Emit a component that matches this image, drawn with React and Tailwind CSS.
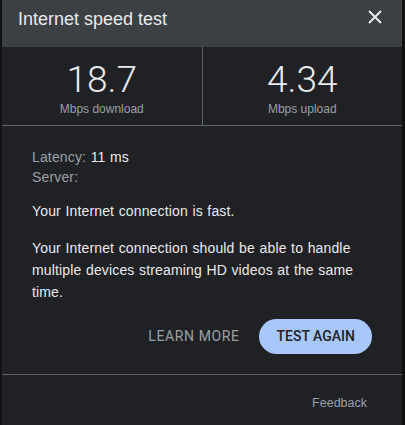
import React from "react";

// Speed test result card
const Stat = ({ value, label, border }) => (
  <div className={`flex-1 flex flex-col items-center pt-[15px] ${border ? "border-r border-[#5f6368]" : ""}`}>
    <div className="font-['Roboto',sans-serif] font-light text-[37px] leading-[36px] text-[#e8eaed]">
      {value}
    </div>
    <div className="text-[12px] leading-[12px] mt-[5px] text-[#9aa0a6]">{label}</div>
  </div>
);

export default function App() {
  return (
    <div className="w-[405px] h-[425px] bg-[#111] flex font-['Liberation_Sans',Arial,sans-serif]">
      <div className="ml-[2px] w-[400px] h-full bg-[#202124] flex flex-col">
        {/* Header */}
        <div className="h-[47px] bg-[#3c4043] flex items-start justify-between pl-[16px] pr-[20px] pt-[8px]">
          <span className="text-[18px] leading-[22px] text-[#e8eaed]">Internet speed test</span>
          <svg width="14" height="14" viewBox="0 0 14 14" className="mt-[2px]">
            <path d="M1 1 L13 13 M13 1 L1 13" stroke="#e8eaed" strokeWidth="2" />
          </svg>
        </div>

        {/* Results */}
        <div className="flex h-[79px] border-b border-[#5f6368]">
          <Stat value="18.7" label="Mbps download" border />
          <Stat value="4.34" label="Mbps upload" />
        </div>

        {/* Details */}
        <div className="px-[30px] pt-[21px] text-[14px] tracking-[0.15px] [word-spacing:0.5px]">
          <div className="leading-[20px] text-[#9aa0a6]">
            Latency: <span className="text-[#e8eaed]">11 ms</span>
          </div>
          <div className="leading-[20px] text-[#9aa0a6]">Server:</div>
          <p className="mt-[13px] leading-[22px] text-[#e8eaed]">Your Internet connection is fast.</p>
          <p className="mt-[15px] leading-[22px] text-[#e8eaed]">
            Your Internet connection should be able to handle multiple devices streaming HD videos at the same time.
          </p>
        </div>

        {/* Actions */}
        <div className="flex justify-end items-center gap-[20px] pr-[30px] mt-[16px] font-['Roboto',sans-serif] text-[14px]">
          <button className="text-[#9aa0a6] tracking-[0.6px]">LEARN MORE</button>
          <button className="h-[35px] px-[17px] rounded-full bg-[#a8c7fa] text-[#202124] font-medium">
            TEST AGAIN
          </button>
        </div>

        <div className="mt-[20px] border-t border-[#5f6368]" />

        <div className="flex justify-end pr-[35px] pt-[19px]">
          <span className="text-[12.5px] text-[#9aa0a6]">Feedback</span>
        </div>
      </div>
    </div>
  );
}
